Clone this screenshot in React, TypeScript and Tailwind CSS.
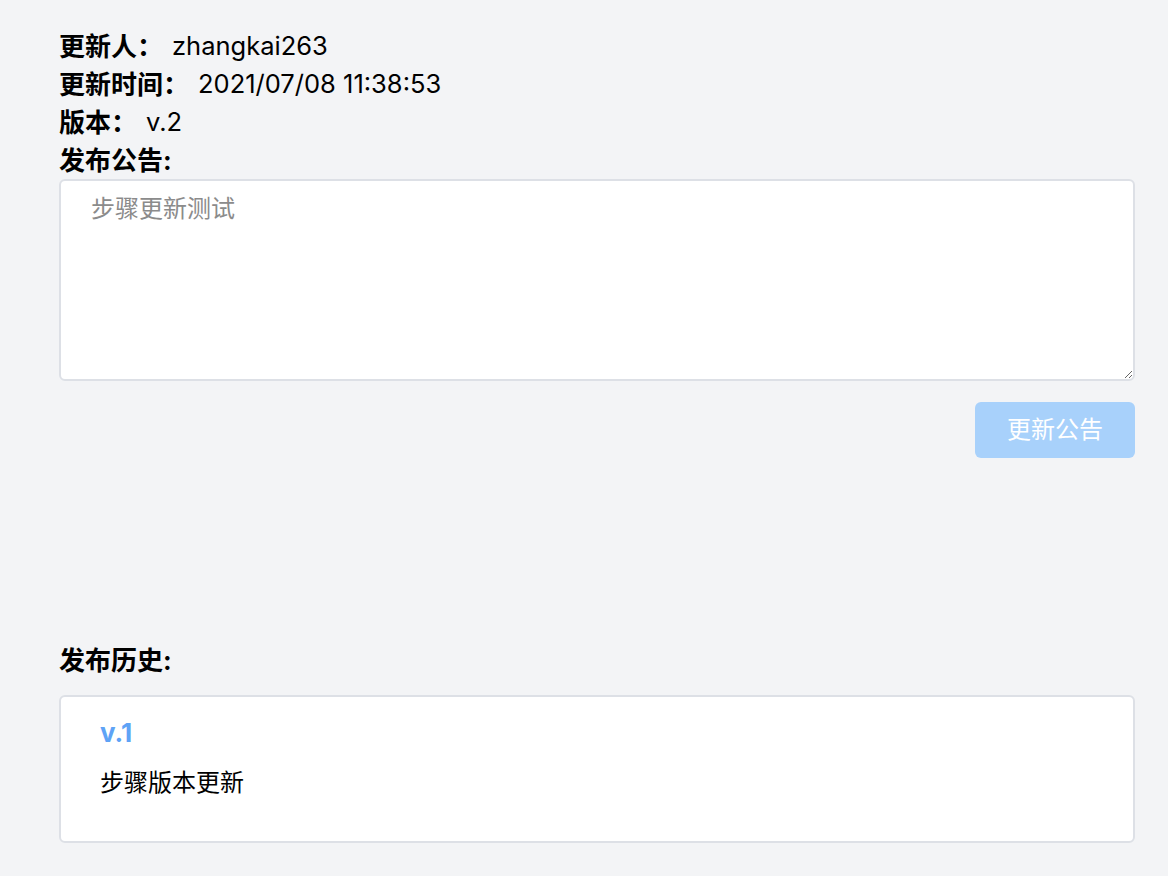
import React from "react";

const FONT = "font-['Inter','Noto_Sans_CJK_SC',sans-serif]";

const INFO = [
  { label: "更新人：", value: "zhangkai263" },
  { label: "更新时间：", value: "2021/07/08 11:38:53" },
  { label: "版本：", value: "v.2" },
];

export default function App() {
  return (
    <div className={`min-h-[876px] w-[1168px] bg-[#f3f4f6] pl-[59px] pr-[33px] pt-[27px] text-black ${FONT}`}>
      {INFO.map((row) => (
        <div key={row.label} className="flex h-[38px] items-center">
          <span className="text-[26px] font-bold">{row.label}</span>
          <span className="ml-[9px] text-[25.5px]">{row.value}</span>
        </div>
      ))}
      <div className="flex h-[38px] items-center text-[26px] font-bold">发布公告:</div>

      <textarea
        className={`block h-[202px] w-full resize-y rounded-[6px] border-2 border-[#dde0e6] bg-white px-[30px] py-[10px] text-[24px] leading-[36px] outline-none placeholder:text-[#8b8b8b] ${FONT}`}
        placeholder="步骤更新测试"
      />

      <div className="mt-[21px] flex justify-end">
        <button
          disabled
          className="h-[56px] w-[160px] rounded-[6px] bg-[#a8d1fb] text-[24px] text-white"
        >
          更新公告
        </button>
      </div>

      <div className="mt-[183px] flex h-[38px] items-center text-[26px] font-bold">发布历史:</div>

      <div className="mt-[16px] h-[148px] rounded-[6px] border-2 border-[#dde0e6] bg-white px-[39px] pt-[19px]">
        <div className="text-[26px] font-bold leading-[34px] text-[#5ea3f6]">v.1</div>
        <div className="mt-[18px] text-[24px] leading-[30px]">步骤版本更新</div>
      </div>
    </div>
  );
}
